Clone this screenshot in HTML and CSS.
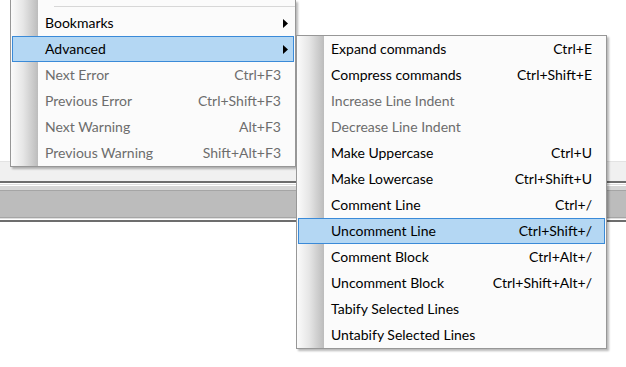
FILE: index.html
```html
<!DOCTYPE html>
<html lang="en">
<head>
  <meta charset="UTF-8">
  <title>Edit menu - Advanced</title>
  <link rel="stylesheet" href="styles.css">
</head>
<body>
  <div class="window">
    <div class="editor-top"></div>
    <div class="status-area"></div>
    <div class="splitter">
      <div class="split-dark"></div>
      <div class="split-white"></div>
      <div class="split-light"></div>
      <div class="split-white"></div>
      <div class="split-soft"></div>
      <div class="split-mid"></div>
    </div>
    <div class="toolbar-band"></div>
    <div class="band-bottom">
      <div class="split-mid"></div>
      <div class="split-light"></div>
      <div class="split-white"></div>
      <div class="split-dark"></div>
    </div>
    <div class="editor-bottom"></div>
  </div>

  <!-- parent drop-down, its top is cut off by the screenshot -->
  <div class="menu menu-parent">
    <div class="separator"></div>
    <div class="item">
      <span class="label">Bookmarks</span>
      <svg class="arrow" width="5" height="9" viewBox="0 0 5 9"><polygon points="0,0 5,4.5 0,9" fill="#000"/></svg>
    </div>
    <div class="item active">
      <span class="label">Advanced</span>
      <svg class="arrow" width="5" height="9" viewBox="0 0 5 9"><polygon points="0,0 5,4.5 0,9" fill="#000"/></svg>
    </div>
    <div class="item disabled"><span class="label">Next Error</span><span class="key">Ctrl+F3</span></div>
    <div class="item disabled"><span class="label">Previous Error</span><span class="key">Ctrl+Shift+F3</span></div>
    <div class="item disabled"><span class="label">Next Warning</span><span class="key">Alt+F3</span></div>
    <div class="item disabled"><span class="label">Previous Warning</span><span class="key">Shift+Alt+F3</span></div>
  </div>

  <!-- Advanced submenu -->
  <div class="menu menu-sub">
    <div class="item"><span class="label">Expand commands</span><span class="key">Ctrl+E</span></div>
    <div class="item"><span class="label">Compress commands</span><span class="key">Ctrl+Shift+E</span></div>
    <div class="item disabled"><span class="label">Increase Line Indent</span></div>
    <div class="item disabled"><span class="label">Decrease Line Indent</span></div>
    <div class="item"><span class="label">Make Uppercase</span><span class="key">Ctrl+U</span></div>
    <div class="item"><span class="label">Make Lowercase</span><span class="key">Ctrl+Shift+U</span></div>
    <div class="item"><span class="label">Comment Line</span><span class="key">Ctrl+/</span></div>
    <div class="item active"><span class="label">Uncomment Line</span><span class="key">Ctrl+Shift+/</span></div>
    <div class="item"><span class="label">Comment Block</span><span class="key">Ctrl+Alt+/</span></div>
    <div class="item"><span class="label">Uncomment Block</span><span class="key">Ctrl+Shift+Alt+/</span></div>
    <div class="item"><span class="label">Tabify Selected Lines</span></div>
    <div class="item"><span class="label">Untabify Selected Lines</span></div>
  </div>
</body>
</html>
```

FILE: styles.css
```css
body {
  margin: 0;
  width: 626px;
  height: 367px;
  overflow: hidden;
  position: relative;
  background-color: white;
  font-family: Lato, "Noto Sans", sans-serif;
  font-size: 14px;
}

.window {
  display: flex;
  flex-direction: column;
  height: 100%;
}

.editor-top {
  height: 161px;
  background-color: white;
}

.status-area {
  height: 20px;
  border-top: 1px solid #e3e3e3;
  background-color: #f0f0f0;
  box-sizing: border-box;
}

.splitter div,
.band-bottom div {
  height: 1px;
}

.split-dark {
  background-color: #6d6d6d;
  height: 2px !important;
}

.split-white {
  background-color: white;
}

.split-light {
  background-color: #dedede;
}

.split-soft {
  background-color: #d6d6d6;
  height: 4px !important;
}

.split-mid {
  background-color: #a5a5a5;
}

.toolbar-band {
  height: 26px;
  background-color: #bcbcbc;
}

.editor-bottom {
  flex: 1;
  background-color: white;
}

/* drop-down menus */
.menu {
  position: absolute;
  box-sizing: border-box;
  border: 1px solid #979797;
  background: linear-gradient(to right, #fbfbfb, #e6e6e6 45%, #bcbcbc) 0 0 / 27px 100% no-repeat, #fbfbfb;
  box-shadow: 2px 2px 2px rgba(0, 0, 0, 0.28);
  color: #000;
}

.menu-parent {
  left: 10px;
  top: 0;
  width: 286px;
  border-top: none;
}

.menu-sub {
  left: 296px;
  top: 35px;
  width: 311px;
}

.separator {
  height: 10px;
  margin-left: 43px;
  position: relative;
}

.separator::after {
  content: "";
  position: absolute;
  left: 0;
  right: 0;
  top: 6px;
  height: 1px;
  background-color: #d7d7d7;
}

.item {
  display: flex;
  align-items: center;
  height: 26px;
  box-sizing: border-box;
  border: 1px solid transparent;
  margin: 0 1px;
  padding: 0 12px 2px 32px;
  position: relative;
  white-space: nowrap;
}

.item .label {
  flex: 1;
}

.item.active {
  background-color: #b4d7f3;
  border-color: #3a8ad8;
}

.item.disabled {
  color: #6d6d6d;
}

.arrow {
  position: absolute;
  right: 5px;
  top: 8px;
}
```
